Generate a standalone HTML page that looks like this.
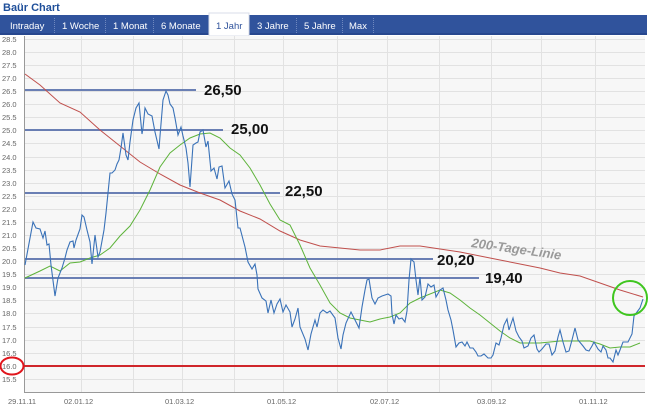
<!DOCTYPE html>
<html><head><meta charset="utf-8"><style>
html,body{margin:0;padding:0;background:#fff;width:650px;height:408px;overflow:hidden;font-family:"Liberation Sans",sans-serif}
</style></head><body>
<svg width="650" height="408" viewBox="0 0 650 408" xmlns="http://www.w3.org/2000/svg" font-family="Liberation Sans, sans-serif">
<text x="3" y="11" font-size="11" font-weight="bold" fill="#1f4f9a">Baür Chart</text>
<rect x="0" y="15" width="647" height="20" fill="#30539c"/>
<rect x="0" y="33" width="647" height="2" fill="#27478e"/>
<g stroke="#6f88bf" stroke-dasharray="1,1" stroke-width="1">
<line x1="54.5" y1="18" x2="54.5" y2="33"/><line x1="105.5" y1="18" x2="105.5" y2="33"/><line x1="153.5" y1="18" x2="153.5" y2="33"/><line x1="296.5" y1="18" x2="296.5" y2="33"/><line x1="342.5" y1="18" x2="342.5" y2="33"/><line x1="373.5" y1="18" x2="373.5" y2="33"/>
</g>
<rect x="209" y="13" width="40" height="23" fill="#fff" stroke="#d8dde8"/>
<g font-size="9.5" fill="#fff">
<text x="10" y="29">Intraday</text><text x="62" y="29">1 Woche</text><text x="113" y="29">1 Monat</text><text x="161" y="29">6 Monate</text>
<text x="216" y="29" fill="#30539c">1 Jahr</text>
<text x="257" y="29">3 Jahre</text><text x="304" y="29">5 Jahre</text><text x="349" y="29">Max</text>
</g>
<rect x="24" y="36" width="621" height="356" fill="#f7f7f7"/>
<g stroke="#e2e2e2" stroke-width="1">
<line x1="24" x2="645" y1="39.5" y2="39.5"/><line x1="24" x2="645" y1="52.5" y2="52.5"/><line x1="24" x2="645" y1="65.5" y2="65.5"/><line x1="24" x2="645" y1="78.5" y2="78.5"/><line x1="24" x2="645" y1="91.5" y2="91.5"/><line x1="24" x2="645" y1="104.5" y2="104.5"/><line x1="24" x2="645" y1="117.5" y2="117.5"/><line x1="24" x2="645" y1="130.5" y2="130.5"/><line x1="24" x2="645" y1="143.5" y2="143.5"/><line x1="24" x2="645" y1="157.5" y2="157.5"/><line x1="24" x2="645" y1="170.5" y2="170.5"/><line x1="24" x2="645" y1="183.5" y2="183.5"/><line x1="24" x2="645" y1="196.5" y2="196.5"/><line x1="24" x2="645" y1="209.5" y2="209.5"/><line x1="24" x2="645" y1="222.5" y2="222.5"/><line x1="24" x2="645" y1="235.5" y2="235.5"/><line x1="24" x2="645" y1="248.5" y2="248.5"/><line x1="24" x2="645" y1="261.5" y2="261.5"/><line x1="24" x2="645" y1="274.5" y2="274.5"/><line x1="24" x2="645" y1="287.5" y2="287.5"/><line x1="24" x2="645" y1="300.5" y2="300.5"/><line x1="24" x2="645" y1="313.5" y2="313.5"/><line x1="24" x2="645" y1="327.5" y2="327.5"/><line x1="24" x2="645" y1="340.5" y2="340.5"/><line x1="24" x2="645" y1="353.5" y2="353.5"/><line x1="24" x2="645" y1="379.5" y2="379.5"/>
<line x1="81.5" x2="81.5" y1="36" y2="392"/><line x1="133.5" x2="133.5" y1="36" y2="392"/><line x1="182.5" x2="182.5" y1="36" y2="392"/><line x1="234.5" x2="234.5" y1="36" y2="392"/><line x1="283.5" x2="283.5" y1="36" y2="392"/><line x1="337.5" x2="337.5" y1="36" y2="392"/><line x1="387.5" x2="387.5" y1="36" y2="392"/><line x1="439.5" x2="439.5" y1="36" y2="392"/><line x1="491.5" x2="491.5" y1="36" y2="392"/><line x1="541.5" x2="541.5" y1="36" y2="392"/><line x1="595.5" x2="595.5" y1="36" y2="392"/>
</g>
<line x1="24.5" y1="36" x2="24.5" y2="393" stroke="#999"/>
<line x1="24" y1="392.5" x2="645" y2="392.5" stroke="#999"/>
<g font-size="7.5" fill="#666">
<text x="2" y="42">28.5</text><text x="2" y="55">28.0</text><text x="2" y="68">27.5</text><text x="2" y="81">27.0</text><text x="2" y="94">26.5</text><text x="2" y="107">26.0</text><text x="2" y="120">25.5</text><text x="2" y="133">25.0</text><text x="2" y="146">24.5</text><text x="2" y="160">24.0</text><text x="2" y="173">23.5</text><text x="2" y="186">23.0</text><text x="2" y="199">22.5</text><text x="2" y="212">22.0</text><text x="2" y="225">21.5</text><text x="2" y="238">21.0</text><text x="2" y="251">20.5</text><text x="2" y="264">20.0</text><text x="2" y="277">19.5</text><text x="2" y="290">19.0</text><text x="2" y="303">18.5</text><text x="2" y="316">18.0</text><text x="2" y="330">17.5</text><text x="2" y="343">17.0</text><text x="2" y="356">16.5</text><text x="2" y="369">16.0</text><text x="2" y="382">15.5</text>
<text x="8" y="404">29.11.11</text><text x="64" y="404">02.01.12</text><text x="165" y="404">01.03.12</text><text x="267" y="404">01.05.12</text><text x="370" y="404">02.07.12</text><text x="477" y="404">03.09.12</text><text x="579" y="404">01.11.12</text>
</g>
<g stroke="#5b73ad" stroke-width="2" opacity="0.9">
<line x1="25" y1="90" x2="196" y2="90"/><line x1="25" y1="130" x2="223" y2="130"/><line x1="25" y1="193" x2="280" y2="193"/><line x1="25" y1="259" x2="433" y2="259"/><line x1="25" y1="278" x2="479" y2="278"/>
</g>
<polyline fill="none" stroke="#c0504d" stroke-width="1" points="25,74 40,85 60,103 80,112 100,130 120,146 140,162 160,174 180,185 200,193 220,200 240,211 260,219 280,231 300,240 320,246 340,248 360,250 380,250 400,246 420,246 440,249 460,252 480,256 500,260 520,264 540,268 560,273 580,276 600,283 620,290 643,297"/>
<polyline fill="none" stroke="#5db33a" stroke-width="1" points="25,278 40,271 50,266 60,271 70,263 80,262 90,258 100,255 110,248 120,236 130,226 140,210 150,190 160,167 170,153 180,145 190,138 200,134 210,133 220,138 230,148 240,155 250,168 260,185 270,204 280,220 290,225 300,245 310,268 320,285 330,303 340,313 350,318 360,320 370,322 380,319 390,317 400,313 410,303 420,298 430,294 440,290 450,293 460,300 470,308 480,315 490,323 500,331 510,338 520,343 530,343 540,343 550,342 560,341 570,341 580,341 590,341 600,344 610,348 620,347 630,347 640,343"/>
<polyline fill="none" stroke="#3a72b8" stroke-width="1.1" points="25,265 33,222 36,228 40,229 43,238 45,231 47,245 49,244 51,265 55,296 58,278 62,268 65,258 67,250 70,242 73,241 74,248 76,240 80,229 82,215 84,217 87,230 90,242 92,264 95,235 98,257 100,252 104,230 106,213 108,193 110,173 112,173 115,170 117,164 119,160 121,148 123,133 126,155 128,160 130,142 133,120 136,108 139,103 142,134 143,128 145,108 148,114 152,116 155,132 159,149 160,136 163,100 166,91 168,95 170,104 173,108 175,118 178,135 181,127 183,136 186,148 188,163 190,187 193,145 196,143 198,142 200,132 203,130 206,147 208,141 211,171 214,168 217,179 219,167 222,166 225,188 229,181 232,194 235,200 238,228 240,228 245,247 248,262 252,269 255,264 257,275 258,289 262,298 266,301 268,313 271,300 274,313 277,304 280,299 283,312 286,305 290,312 292,327 295,319 298,308 300,327 305,339 308,350 311,334 315,320 317,327 320,313 323,310 327,313 330,311 335,318 338,338 341,349 343,335 346,323 351,312 356,322 359,328 362,307 365,290 367,280 369,279 372,298 375,304 378,298 382,296 385,295 388,294 391,296 392,314 394,324 396,315 399,319 402,318 405,322 407,311 409,280 411,259 414,262 416,280 418,295 420,277 422,300 425,297 428,284 431,287 434,285 436,297 440,290 443,288 446,300 448,310 451,320 453,330 456,347 459,343 462,342 465,346 467,342 470,348 473,348 476,352 478,356 481,356 484,354 488,358 491,358 493,355 496,343 499,345 501,338 504,325 507,319 509,330 513,318 516,331 519,337 522,341 524,348 528,346 531,338 534,335 537,349 539,352 542,349 546,344 549,344 552,355 555,351 558,337 560,330 563,342 566,352 569,351 572,340 575,328 578,340 583,346 586,350 589,351 592,346 594,342 598,349 601,352 603,346 606,350 608,358 610,358 613,362 616,350 618,355 620,350 623,342 628,342 632,334 634,316 637,312 640,308 643,299"/>
<line x1="24" y1="366" x2="645" y2="366" stroke="#d0262b" stroke-width="2"/>
<ellipse cx="12" cy="366" rx="11.5" ry="8.5" fill="none" stroke="#e0151c" stroke-width="2"/>
<circle cx="630" cy="298" r="17" fill="none" stroke="#3fc61f" stroke-width="2"/>
<g font-size="15" font-weight="bold" fill="#111">
<text x="204" y="95">26,50</text><text x="231" y="134">25,00</text><text x="285" y="196">22,50</text><text x="437" y="265">20,20</text><text x="485" y="283">19,40</text>
</g>
<text x="471" y="247" font-size="13" font-weight="bold" font-style="italic" fill="#9a9a9a" transform="rotate(8 471 247)">200-Tage-Linie</text>
</svg>
</body></html>
